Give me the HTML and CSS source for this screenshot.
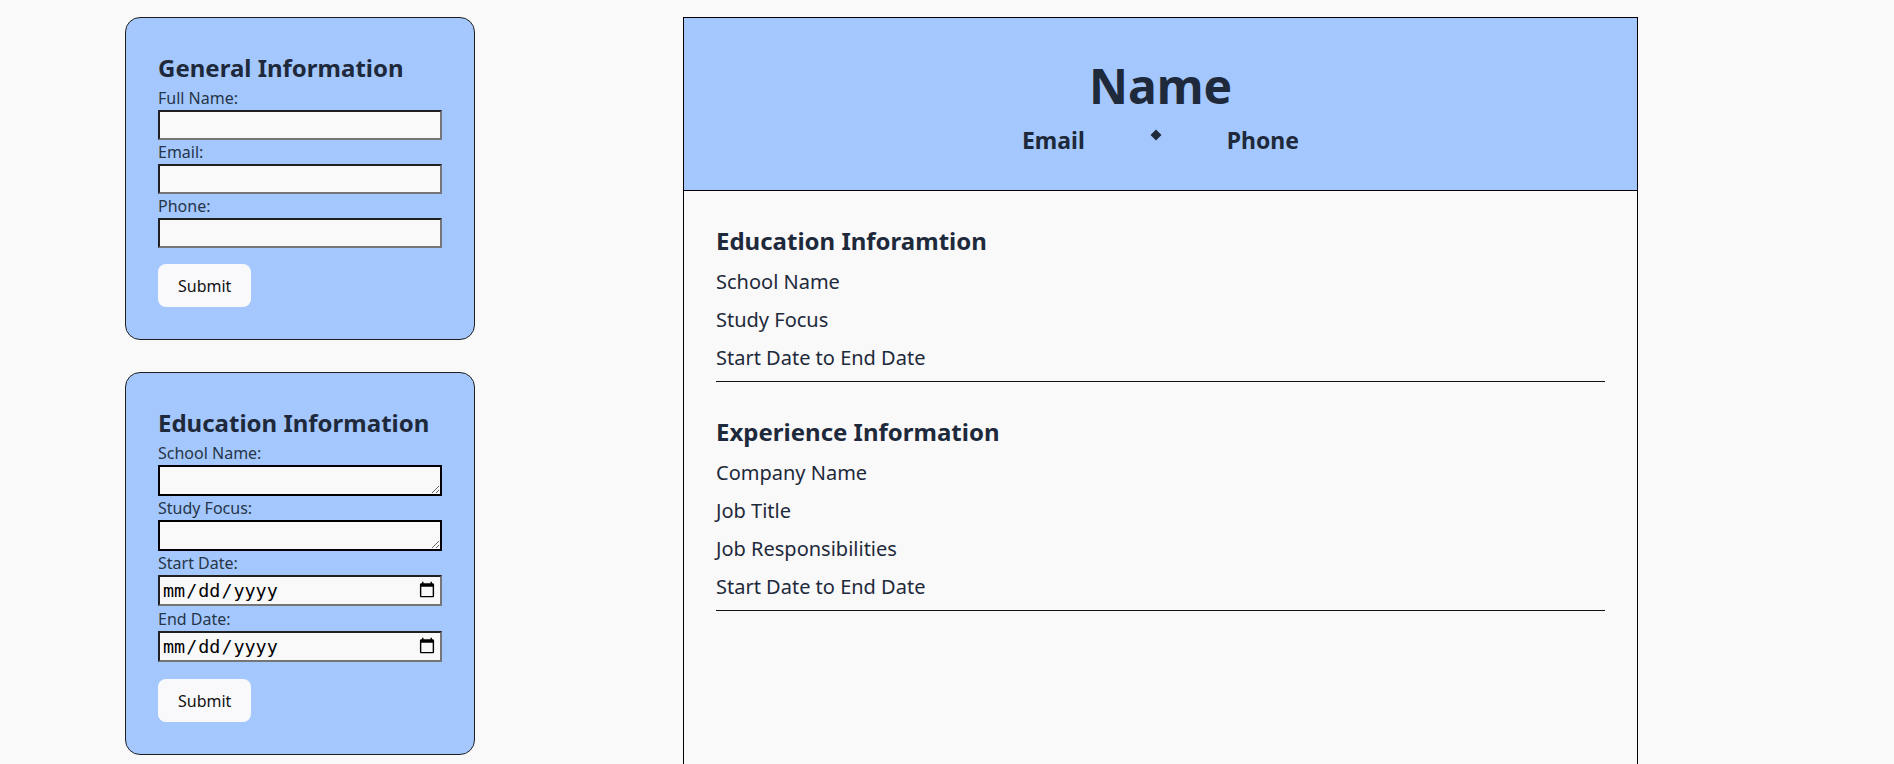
FILE: index.html
```html
<!DOCTYPE html>
<html lang="en">
<head>
<meta charset="utf-8">
<title>CV Builder</title>
<link rel="stylesheet" href="styles.css">
</head>
<body>
<main class="page">
  <aside class="forms">
    <section class="card">
      <h2 class="card-title">General Information</h2>
      <form class="form">
        <label class="field-label" for="full-name">Full Name:</label>
        <input class="field text-input" id="full-name" type="text">
        <label class="field-label" for="email">Email:</label>
        <input class="field text-input" id="email" type="email">
        <label class="field-label" for="phone">Phone:</label>
        <input class="field text-input" id="phone" type="tel">
        <button class="submit" type="button">Submit</button>
      </form>
    </section>

    <section class="card">
      <h2 class="card-title">Education Information</h2>
      <form class="form">
        <label class="field-label" for="school">School Name:</label>
        <textarea class="field area-input" id="school"></textarea>
        <label class="field-label" for="focus">Study Focus:</label>
        <textarea class="field area-input" id="focus"></textarea>
        <label class="field-label" for="edu-start">Start Date:</label>
        <input class="field date-input" id="edu-start" type="date">
        <label class="field-label" for="edu-end">End Date:</label>
        <input class="field date-input" id="edu-end" type="date">
        <button class="submit" type="button">Submit</button>
      </form>
    </section>
  </aside>

  <article class="resume">
    <header class="resume-header">
      <h1 class="resume-name">Name</h1>
      <div class="contact">
        <span class="contact-item">Email</span>
        <span class="contact-sep"><svg width="12" height="12" viewBox="0 0 12 12"><polygon points="6,0.5 11.5,6 6,11.5 0.5,6" fill="#1e293b"/></svg></span>
        <span class="contact-item">Phone</span>
      </div>
    </header>

    <section class="resume-section">
      <h2 class="section-title">Education Inforamtion</h2>
      <p class="line">School Name</p>
      <p class="line">Study Focus</p>
      <p class="line">Start Date to End Date</p>
      <div class="divider"></div>
    </section>

    <section class="resume-section">
      <h2 class="section-title">Experience Information</h2>
      <p class="line">Company Name</p>
      <p class="line">Job Title</p>
      <p class="line">Job Responsibilities</p>
      <p class="line">Start Date to End Date</p>
      <div class="divider"></div>
    </section>
  </article>
</main>
</body>
</html>
```

FILE: styles.css
```css
* {
  box-sizing: border-box;
}

body {
  margin: 8px;
  background: #f9f9f9;
  font-family: "Noto Sans", "Open Sans", sans-serif;
  font-size: 16px;
  color: #1e293b;
}

.page {
  display: flex;
  align-items: flex-start;
  gap: 208px;
  padding: 9px 0 0 117px;
}

/* ---------- left column ---------- */
.forms {
  width: 350px;
  flex: none;
  display: flex;
  flex-direction: column;
  gap: 32px;
}

.card {
  background: #a4c8fd;
  border: 1px solid #1f1f1f;
  border-radius: 15px;
  padding: 33px 32px 32px;
}

.card-title {
  margin: 0 0 2px;
  font-size: 24px;
  font-weight: 700;
  line-height: normal;
  color: #1e293b;
}

.form {
  display: flex;
  flex-direction: column;
  align-items: stretch;
}

.field-label {
  display: block;
  margin-top: 1px;
  font-size: 16px;
  line-height: 22px;
  color: #263548;
}

.field {
  display: block;
  width: 100%;
  margin: 1px 0 0;
  background: #f9f9f9;
  font-family: "DejaVu Sans Mono", monospace;
  font-size: 18.4px;
  color: #000;
}

.text-input,
.date-input {
  height: 30px;
  border-width: 2px;
  border-style: solid;
  border-color: #202020 #767676 #767676 #202020;
  padding: 1px 2px;
}

.date-input {
  height: 31px;
  margin-bottom: 1px;
}

.area-input {
  height: 31px;
  border: 2px solid #000;
  padding: 2px;
  resize: vertical;
}

.submit {
  align-self: flex-start;
  margin-top: 16px;
  padding: 10.5px 20px;
  border: none;
  border-radius: 8px;
  background: #f9f9fb;
  font-family: "Noto Sans", "Open Sans", sans-serif;
  font-size: 16px;
  line-height: normal;
  color: #111;
}

/* ---------- resume preview ---------- */
.resume {
  width: 955px;
  flex: none;
  min-height: 1100px;
  border: 1px solid #000;
  background: #f9f9f9;
}

.resume-header {
  background: #a4c8fd;
  border-bottom: 1px solid #000;
  padding: 35px 32px 34px;
  text-align: center;
}

.resume-name {
  margin: 0 0 6px;
  font-size: 48px;
  font-weight: 700;
  line-height: normal;
  color: #1e293b;
}

.contact {
  display: flex;
  justify-content: center;
  align-items: flex-start;
  gap: 65px;
  font-size: 23px;
  font-weight: 700;
  line-height: normal;
}

.contact-sep {
  display: flex;
  width: 12px;
  height: 12px;
  margin-top: 5px;
}

.resume-section {
  display: flex;
  flex-direction: column;
  gap: 10px;
  padding: 33px 32px 0;
}

.section-title {
  margin: 0 0 1px;
  font-size: 24px;
  font-weight: 700;
  line-height: normal;
}

.line {
  margin: 0;
  font-size: 20px;
  line-height: 28px;
}

.divider {
  height: 1px;
  margin-top: -1px;
  background: #111;
}
```
